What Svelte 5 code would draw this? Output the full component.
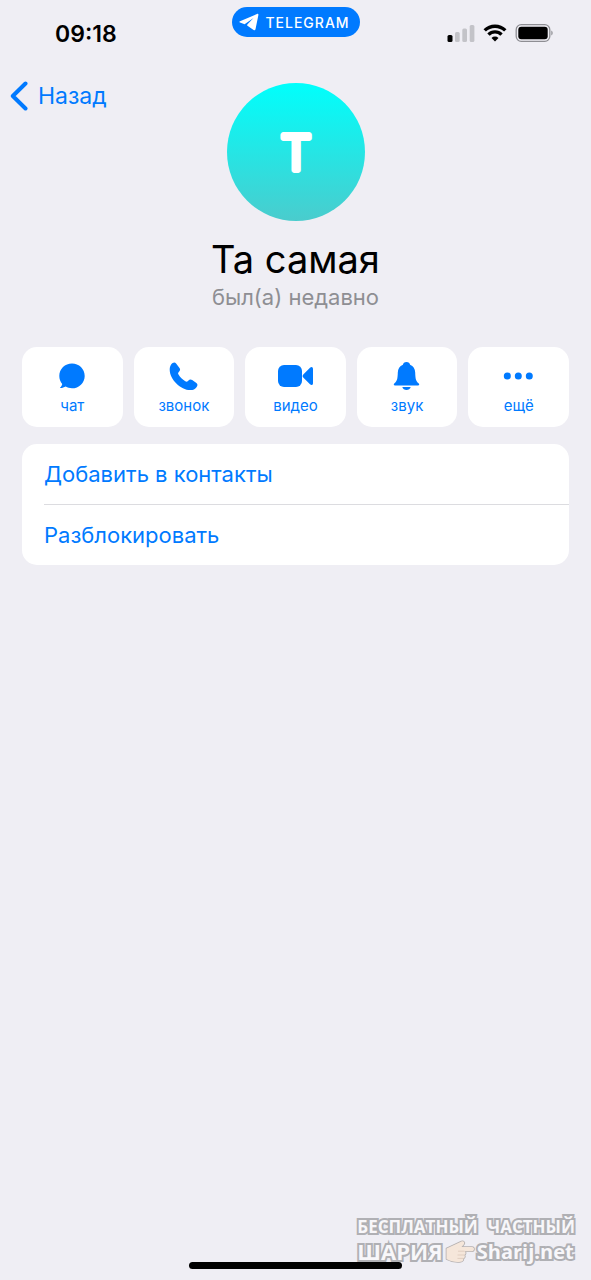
<!-- Script section -->
<script>
    const name = 'Та самая';

    const actions = [
        { id: 'chat', title: 'чат' },
        { id: 'call', title: 'звонок' },
        { id: 'video', title: 'видео' },
        { id: 'sound', title: 'звук' },
        { id: 'more', title: 'ещё' },
    ];

    const options = ['Добавить в контакты', 'Разблокировать'];
</script>

<!-- HTML section -->
<div class="screen">
    <div class="status">
        <time>09:18</time>
        <a class="pill" href="#telegram">
            <svg width="20" height="18" viewBox="0 0 20 18" fill="#fff"><path d="M18 1 1 8.200c-.8.4-.8 1.100 0 1.400l4.600 1.600L14.500 5 8.300 11.600l-.2.9 6.500 4.500c.9.5 1.600.2 1.900-.8L19.400 2c.2-.9-.5-1.400-1.400-1z"></path></svg>
            <span>TELEGRAM</span>
        </a>
        <div class="indicators">
            <svg width="28" height="18" viewBox="0 0 28 18">
                <rect x="0.500" y="11" width="5" height="7" rx="1.500" fill="#000"></rect>
                <g fill="#c3c3c8">
                    <rect x="8" y="8" width="4.700" height="10" rx="1.500"></rect>
                    <rect x="15.300" y="4.500" width="4.700" height="13.500" rx="1.500"></rect>
                    <rect x="22.700" y="1" width="4.700" height="17" rx="1.500"></rect>
                </g>
            </svg>
            <svg width="24" height="18" viewBox="0 0 24 18" fill="none" stroke="#000" stroke-width="3.400">
                <path d="M1.700 6.400a14.700 14.700 0 0 1 20.600 0"></path>
                <path d="M5.500 10.600a9.200 9.200 0 0 1 13 0"></path>
                <path d="M12 17.500 8.500 14a5 5 0 0 1 7 0z" fill="#000" stroke="none"></path>
            </svg>
            <svg width="38" height="18" viewBox="0 0 38 18">
                <rect x="1.200" y="0.700" width="33.600" height="16.600" rx="5" fill="none" stroke="#8e8e93" stroke-width="1.300"></rect>
                <rect x="3.300" y="2.800" width="29.400" height="12.400" rx="3" fill="#000"></rect>
                <path d="M36.300 6.500c1.800.8 1.800 4.200 0 5z" fill="#8e8e93"></path>
            </svg>
        </div>
    </div>

    <header>
        <button class="back">
            <svg width="18" height="30" viewBox="0 0 18 30" fill="none" stroke="currentColor" stroke-width="4" stroke-linecap="round" stroke-linejoin="round"><path d="M15.500 2.500 2.800 15l12.700 12.500"></path></svg>
            <span>Назад</span>
        </button>
        <svg class="avatar" width="138" height="138" viewBox="0 0 138 138">
            <defs>
                <linearGradient id="avatar-fill" x1="0" y1="0" x2="0" y2="1">
                    <stop offset="0" stop-color="#00fffc"></stop>
                    <stop offset="1" stop-color="#4acccd"></stop>
                </linearGradient>
            </defs>
            <circle cx="69" cy="69" r="69" fill="url(#avatar-fill)"></circle>
            <text x="69" y="87" text-anchor="middle">{name[0]}</text>
        </svg>
    </header>

    <div class="profile">
        <h1>{name}</h1>
        <p>был(а) недавно</p>
    </div>

    <div class="actions">
        {#each actions as action (action.id)}
            <button>
                <svg width="38" height="30" viewBox="0 0 38 30" fill="currentColor">
                    {#if action.id === 'chat'}
                        <path d="M19 2.500c7 0 12.700 5.500 12.700 12.400S26 27.300 19 27.300c-2.400 0-4.500-.6-6.300-1.700-1.500.9-3.500 1.500-5 1.500-.7 0-.8-.5-.3-.9.9-.8 1.600-2 1.800-3.300-1.800-2.200-2.900-5-2.900-8 0-6.900 5.700-12.400 12.700-12.400z"></path>
                    {:else if action.id === 'call'}
                        <path d="M6.300 3.300C7.700 1.500 9.700.8 11.100 2.400l3.400 4.500c1 1.400.7 2.500-.5 3.800-1 1.100-1.200 1.700-.5 2.900 1.600 2.800 3.900 5 6.800 6.700 1.200.7 1.900.4 2.900-.6 1.300-1.300 2.500-1.600 4-.6l4.200 2.900c1.500 1.100 1.300 2.600.1 4.200-1.500 2-3.500 3-6.300 2.900C15.800 29 4.700 18.300 4.700 8.700c0-2.200.5-4 1.600-5.400z"></path>
                    {:else if action.id === 'video'}
                        <rect x="2" y="4" width="24" height="22" rx="6"></rect>
                        <path d="M27.500 13.200 34 6.700c1.500-1.500 3-.8 3 1.300v14c0 2.100-1.500 2.800-3 1.300l-6.500-6.500c-1.200-1.200-1.200-2.400 0-3.600z"></path>
                    {:else if action.id === 'sound'}
                        <path d="M18.500 1c2.100 0 3.400 1.200 3.600 2.800 3.300 1.400 5 4.200 5.100 7.700.2 6.300.7 8.700 3.300 10.700 1.100.9 1 2.300-.6 2.300H7.100c-1.600 0-1.700-1.400-.6-2.300 2.600-2 3.100-4.400 3.300-10.700.1-3.500 1.800-6.300 5.100-7.700C15.100 2.200 16.400 1 18.500 1z"></path>
                        <path d="M14.300 26h8.400c-.5 1.800-2.200 3-4.200 3s-3.700-1.200-4.200-3z"></path>
                    {:else}
                        <circle cx="7.300" cy="15" r="3.500"></circle>
                        <circle cx="18.300" cy="15" r="3.500"></circle>
                        <circle cx="29.300" cy="15" r="3.500"></circle>
                    {/if}
                </svg>
                <span>{action.title}</span>
            </button>
        {/each}
    </div>

    <ul>
        {#each options as option}
            <li><button>{option}</button></li>
        {/each}
    </ul>

    <div class="home"></div>

    <div class="watermark">
        <div class="slogan">
            <span>БЕСПЛАТНЫЙ</span>
            <span>ЧАСТНЫЙ</span>
        </div>
        <div class="site">
            <span class="city">ШАРИЯ</span>
            <svg width="30" height="24" viewBox="0 0 30 24" fill="#f5e6da" stroke="#b5b0b0" stroke-width="1.600" stroke-linejoin="round">
                <path d="M1.500 8.500 9 5l7.500-3.500c2-.8 3.600 1 2.400 2.700L16.500 7H27c2.700 0 2.700 4.200 0 4.200h-7.500c1.600 1 1.500 3-.2 3.700 1 1.300.6 3-1.100 3.500.5 1.700-.6 3.100-2.500 3.300-4.200.5-8.700.3-14.200-2.700z"></path>
                <path d="M13 11.200h6.500M12.500 15h6.800M12.500 18.400h5.700" stroke="#dcc8ba" stroke-width="0.800"></path>
            </svg>
            <span>Sharij.net</span>
        </div>
    </div>
</div>

<!-- Styles section -->
<style>
    :global(body) {
        margin: 0;
        background: #efeef4;
    }

    .screen {
        position: relative;
        display: flex;
        flex-direction: column;
        box-sizing: border-box;
        min-height: 100vh;
        padding-bottom: 11px;
        font-family: Inter, "Noto Sans", sans-serif;
        background: #efeef4;
        color: #000;
    }

    svg {
        display: block;
        flex: none;
    }

    button {
        border: none;
        background: none;
        margin: 0;
        padding: 0;
        font: inherit;
        color: #007aff;
        cursor: pointer;
    }

    .status {
        display: grid;
        grid-template-columns: 1fr auto 1fr;
        height: 60px;
        padding: 7px 38px 0 55px;
        box-sizing: border-box;
    }

    time {
        padding-top: 12px;
        font-size: 23px;
        line-height: 30px;
        font-weight: 600;
    }

    .pill {
        display: flex;
        align-items: center;
        gap: 6px;
        height: 30px;
        margin-right: 16px;
        padding: 0 10px 0 7px;
        border-radius: 15px;
        background: #007aff;
        color: #fff;
        font-size: 14px;
        font-weight: 500;
        letter-spacing: 1px;
        text-decoration: none;
    }

    .indicators {
        display: flex;
        justify-content: flex-end;
        gap: 8px;
        padding-top: 17px;
    }

    header {
        display: grid;
        grid-template-columns: 1fr auto 1fr;
        align-items: start;
        padding: 23px 10px 0;
    }

    .back {
        display: flex;
        align-items: center;
        justify-self: start;
        gap: 10px;
        height: 26px;
        font-size: 23px;
    }

    .avatar text {
        font-size: 48px;
        font-weight: 300;
        fill: #fff;
        stroke: #fff;
        stroke-width: 6px;
        stroke-linejoin: round;
    }

    .profile {
        padding-top: 14px;
        text-align: center;
    }

    h1 {
        margin: 0;
        font-size: 38px;
        line-height: 48px;
        font-weight: 400;
    }

    p {
        margin: 0;
        font-size: 22px;
        line-height: 28px;
        color: #8e8e93;
    }

    .actions {
        display: grid;
        grid-template-columns: repeat(5, 1fr);
        gap: 11px;
        padding: 36px 22px 17px;
    }

    .actions button {
        display: flex;
        flex-direction: column;
        align-items: center;
        gap: 6px;
        height: 80px;
        padding-top: 14px;
        border-radius: 15px;
        background: #fff;
        font-size: 15px;
        line-height: 18px;
    }

    ul {
        list-style: none;
        margin: 0 22px;
        padding: 0 0 0 22px;
        border-radius: 15px;
        background: #fff;
    }

    li + li {
        border-top: 1px solid #dcdce0;
    }

    li button {
        width: 100%;
        height: 60px;
        font-size: 22px;
        text-align: left;
    }

    .home {
        width: 36%;
        height: 7px;
        margin: auto auto 0;
        border-radius: 4px;
        background: #000;
        z-index: 1;
    }

    .watermark {
        position: absolute;
        right: 16px;
        bottom: 16px;
        font-family: "Open Sans", "Noto Sans", sans-serif;
        font-size: 17px;
        line-height: 25px;
        font-weight: 700;
        color: #f8f7fa;
        -webkit-text-stroke: 4px #b0b0b4;
        paint-order: stroke fill;
    }

    .slogan {
        display: flex;
        gap: 10px;
    }

    .site {
        display: flex;
        align-items: center;
        gap: 2px;
        font-size: 20px;
    }

    .city {
        font-size: 22px;
    }
</style>
